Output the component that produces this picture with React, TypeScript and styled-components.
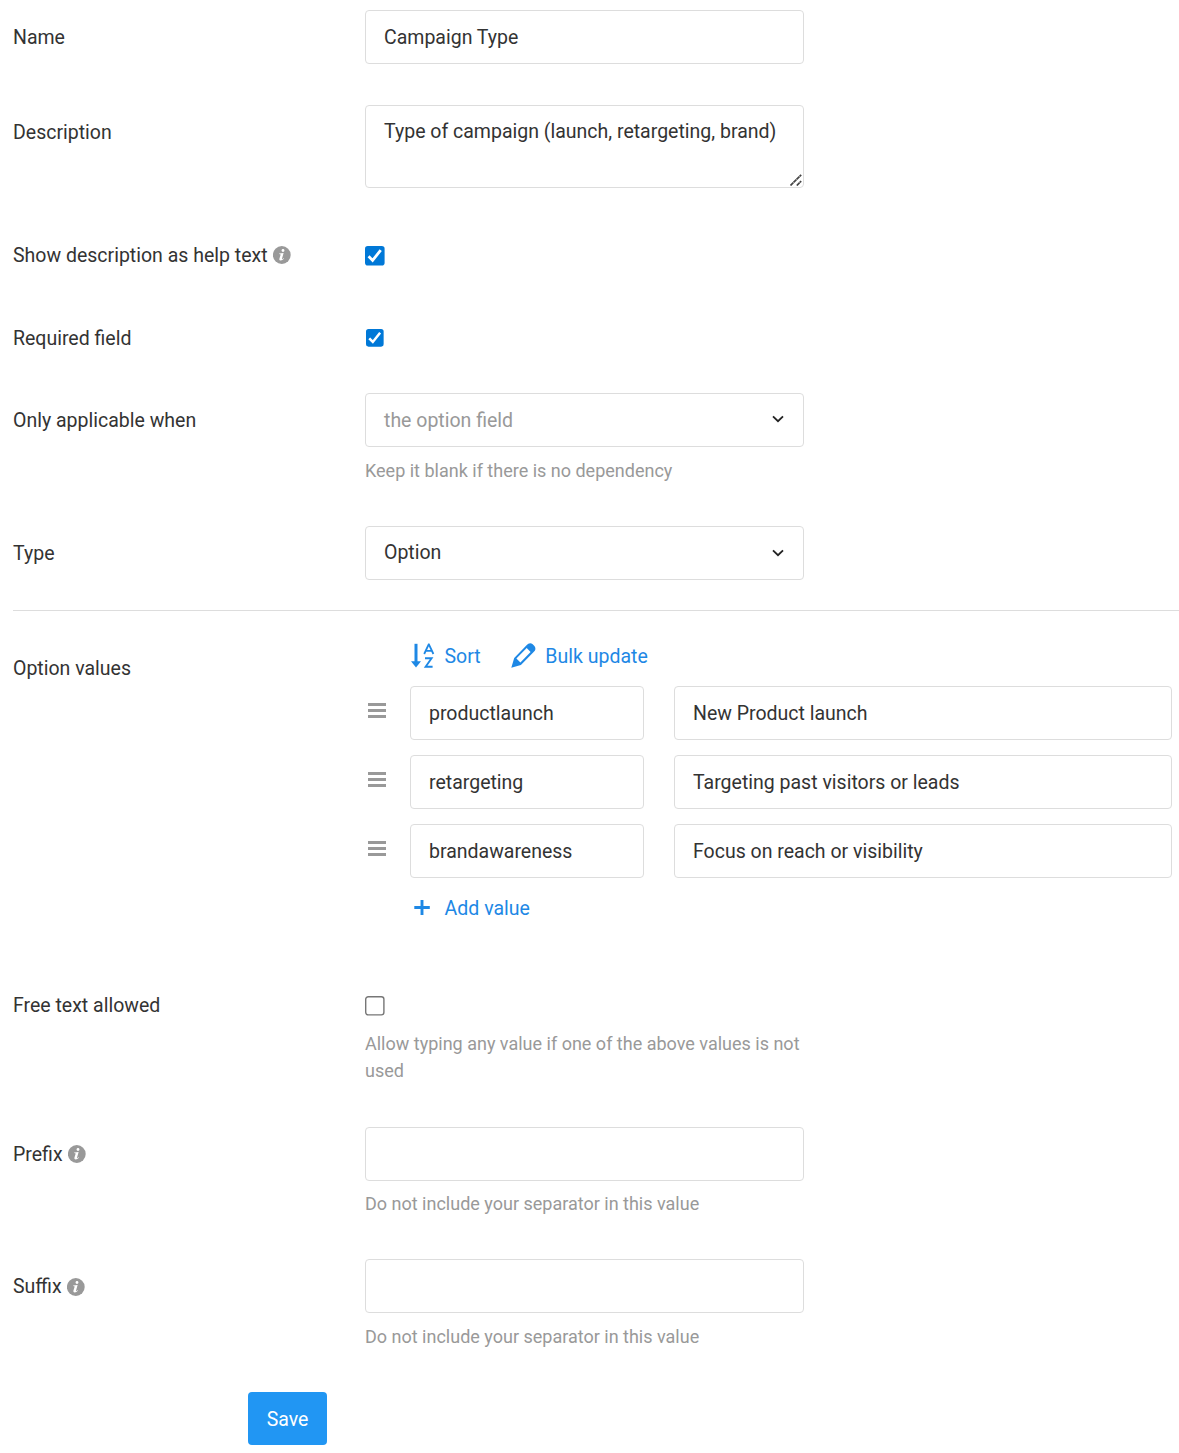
import React, { useState } from "react";
import styled, { createGlobalStyle } from "styled-components";

const GlobalStyle = createGlobalStyle`
  *, *::before, *::after { box-sizing: border-box; }
  body {
    margin: 0;
    background: #fff;
    color: #333;
    font-family: Roboto, "Liberation Sans", sans-serif;
    font-size: 19.5px;
    line-height: 27px;
  }
`;

const Form = styled.form`
  width: 1179px;
  height: 1453px;
  padding: 10px 0 0 13px;
  overflow: hidden;
`;

const Row = styled.div<{ $height: number }>`
  display: grid;
  grid-template-columns: 352px 1fr;
  align-items: start;
  height: ${(p) => p.$height}px;
`;

const OptionsRow = styled(Row)`
  border-top: 1px solid #ddd;
  padding: 30px 7px 0 0;
`;

const Label = styled.label<{ $iconDrop?: number }>`
  display: flex;
  align-items: center;
  gap: 5px;
  height: 54px;
  white-space: nowrap;

  svg { margin-top: ${(p) => p.$iconDrop ?? 0}px; }
`;

const Control = styled.div`
  width: 439px;
  position: relative;
`;

const Input = styled.input`
  display: block;
  width: 100%;
  height: 54px;
  padding: 0 18px;
  border: 1px solid #ddd;
  border-radius: 4px;
  background: #fff;
  color: #333;
  font: inherit;
  outline: none;
`;

const TextArea = styled.textarea`
  display: block;
  width: 100%;
  height: 83px;
  padding: 12px 18px;
  border: 1px solid #ddd;
  border-radius: 4px;
  color: #333;
  font: inherit;
  resize: none;
  outline: none;
  overflow: hidden;
`;

const Grip = styled.svg`
  position: absolute;
  right: 2px;
  bottom: 2px;
`;

const Select = styled.button<{ $muted?: boolean }>`
  display: flex;
  align-items: center;
  justify-content: space-between;
  width: 100%;
  height: 54px;
  padding: ${(p) => (p.$muted ? "1px 19px 0 18px" : "0 19px 1px 18px")};
  border: 1px solid #ddd;
  border-radius: 4px;
  background: #fff;
  color: ${(p) => (p.$muted ? "#999" : "#333")};
  font: inherit;

  svg { margin-bottom: ${(p) => (p.$muted ? 3 : 0)}px; }
`;

const Help = styled.p<{ $gap?: number }>`
  margin: ${(p) => p.$gap ?? 10}px 0 0;
  color: #999;
  font-size: 18px;
  line-height: 27px;
`;

const CheckHolder = styled.div<{ $size: number }>`
  display: flex;
  align-items: center;
  width: 20px;
  height: 54px;
  padding-top: ${(p) => (p.$size > 18 ? 1 : 0)}px;
`;

const CheckButton = styled.button<{ $size: number }>`
  display: flex;
  width: ${(p) => p.$size}px;
  height: ${(p) => p.$size}px;
  margin: 0 auto;
  padding: 0;
  border: 0;
  background: none;
`;

const Options = styled.div`
  display: flex;
  flex-direction: column;
`;

const Toolbar = styled.div`
  display: flex;
  gap: 30px;
  height: 45px;
  padding-left: 45px;

  svg { margin-top: -1px; }
`;

const Action = styled.button<{ $gap: number }>`
  display: flex;
  align-items: center;
  gap: ${(p) => p.$gap}px;
  height: 30px;
  padding: 0;
  border: 0;
  background: none;
  color: #1e88e5;
  font: inherit;
  cursor: pointer;
`;

const OptionLine = styled.div`
  display: grid;
  grid-template-columns: 45px 234px 498px;
  column-gap: 0;
  height: 69px;

  & > :last-child { margin-left: 30px; }
`;

const Handle = styled.span`
  display: flex;
  flex-direction: column;
  gap: 3px;
  width: 18px;
  margin: 17px 0 0 3px;

  i { height: 3px; background: #999; }
`;

const AddLine = styled.div`
  padding-left: 45px;
`;

const Save = styled.button`
  display: block;
  width: 79px;
  height: 53px;
  margin-left: 235px;
  padding: 2px 0 0;
  border: 0;
  border-radius: 4px;
  background: #2196f3;
  color: #fff;
  font: inherit;
`;

const InfoIcon = () => (
  <svg width="18" height="18" viewBox="0 0 18 18" aria-hidden="true">
    <circle cx="8.8" cy="9" r="8.9" fill="#999" />
    <circle cx="10" cy="4.5" r="1.4" fill="#fff" />
    <path d="M6.1 7.4 10.6 7 9 12.7q-.1.7.5.4l1.2-.9.4.4q-1.6 2-3.5 2-1.6-.1-1.2-1.8l1.3-4.4-1.5-.3z" fill="#fff" />
  </svg>
);

const Chevron = () => (
  <svg width="12" height="8" viewBox="0 0 12 8" fill="none" aria-hidden="true">
    <path d="m1 1.3 5 4.9 5-4.9" stroke="#222" strokeWidth="1.8" />
  </svg>
);

const SortIcon = () => (
  <svg width="26" height="26" viewBox="0 0 26 26" fill="none" stroke="#1e88e5" aria-hidden="true">
    <path d="M6 .8v20" strokeWidth="3" />
    <path d="M1 18.3h10l-5 6.2z" fill="#1e88e5" stroke="none" />
    <path d="m14.2 11 4.5-9.6h.2l4.5 9.6M15.8 7.8h6" strokeWidth="1.8" />
    <path d="M15 15.2h6.6l-6 8.6h7" strokeWidth="1.9" />
  </svg>
);

const PencilIcon = () => (
  <svg width="25" height="25" viewBox="0 0 25 25" aria-hidden="true">
    <path
      fill="#1e88e5"
      fillRule="evenodd"
      d="M.3 24.8 3.2 15 15.8 2 17.3.8q2.3-1.2 4.4.5l1.7 1.8q1.8 2.3.4 4.6l-1.4 1.6L9.9 21.9zM5.4 15.6l4 4L19.6 9 15.7 5z"
    />
  </svg>
);

const PlusIcon = () => (
  <svg width="24" height="24" viewBox="0 0 24 24" fill="none" aria-hidden="true">
    <path d="M12 4v15M4.3 11.5h15.5" stroke="#1e88e5" strokeWidth="2.9" />
  </svg>
);

function Checkbox({ initial, size = 20, label }: { initial: boolean; size?: number; label: string }) {
  const [on, setOn] = useState(initial);
  return (
    <CheckHolder $size={size}>
      <CheckButton type="button" role="checkbox" aria-checked={on} aria-label={label} $size={size} onClick={() => setOn(!on)}>
        <svg width={size} height={size} viewBox="0 0 20 20" fill="none">
          {on ? (
            <>
              <rect width="19.6" height="19.6" rx="2.8" fill="#0078d7" />
              <path d="m3.6 10.3 4 4.1 8.1-10.2" stroke="#fff" strokeWidth="2.8" />
            </>
          ) : (
            <rect x=".7" y=".7" width="18.2" height="18.2" rx="2.6" fill="#fff" stroke="#767676" strokeWidth="1.4" />
          )}
        </svg>
      </CheckButton>
    </CheckHolder>
  );
}

const optionValues = [
  ["productlaunch", "New Product launch"],
  ["retargeting", "Targeting past visitors or leads"],
  ["brandawareness", "Focus on reach or visibility"],
];

export default function App() {
  return (
    <>
      <GlobalStyle />
      <Form>
        <Row $height={95}>
          <Label>Name</Label>
          <Control><Input defaultValue="Campaign Type" /></Control>
        </Row>
        <Row $height={123}>
          <Label>Description</Label>
          <Control>
            <TextArea defaultValue="Type of campaign (launch, retargeting, brand)" />
            <Grip width="12" height="12" viewBox="0 0 12 12" fill="none" aria-hidden="true">
              <path d="M.5 11.5 11.2.8M6.8 11.5l4.4-4.4" stroke="#444" strokeWidth="1.7" strokeDasharray="4 .3" />
            </Grip>
          </Control>
        </Row>
        <Row $height={83}>
          <Label>Show description as help text <InfoIcon /></Label>
          <Checkbox initial label="Show description as help text" />
        </Row>
        <Row $height={82}>
          <Label>Required field</Label>
          <Checkbox initial size={18} label="Required field" />
        </Row>
        <Row $height={133}>
          <Label>Only applicable when</Label>
          <Control>
            <Select type="button" $muted>the option field<Chevron /></Select>
            <Help>Keep it blank if there is no dependency</Help>
          </Control>
        </Row>
        <Row $height={84}>
          <Label>Type</Label>
          <Control><Select type="button">Option<Chevron /></Select></Control>
        </Row>
        <OptionsRow $height={368}>
          <Label>Option values</Label>
          <Options>
            <Toolbar>
              <Action type="button" $gap={8.5}><SortIcon />Sort</Action>
              <Action type="button" $gap={9.7}><PencilIcon />Bulk update</Action>
            </Toolbar>
            {optionValues.map(([value, text]) => (
              <OptionLine key={value}>
                <Handle><i /><i /><i /></Handle>
                <Input defaultValue={value} />
                <Input defaultValue={text} />
              </OptionLine>
            ))}
            <AddLine><Action type="button" $gap={10.6}><PlusIcon />Add value</Action></AddLine>
          </Options>
        </OptionsRow>
        <Row $height={149}>
          <Label>Free text allowed</Label>
          <Control>
            <Checkbox initial={false} label="Free text allowed" />
            <Help $gap={-2}>Allow typing any value if one of the above values is not used</Help>
          </Control>
        </Row>
        <Row $height={132}>
          <Label>Prefix <InfoIcon /></Label>
          <Control>
            <Input />
            <Help $gap={9}>Do not include your separator in this value</Help>
          </Control>
        </Row>
        <Row $height={133}>
          <Label $iconDrop={2}>Suffix <InfoIcon /></Label>
          <Control>
            <Input />
            <Help>Do not include your separator in this value</Help>
          </Control>
        </Row>
        <Save type="button">Save</Save>
      </Form>
    </>
  );
}
